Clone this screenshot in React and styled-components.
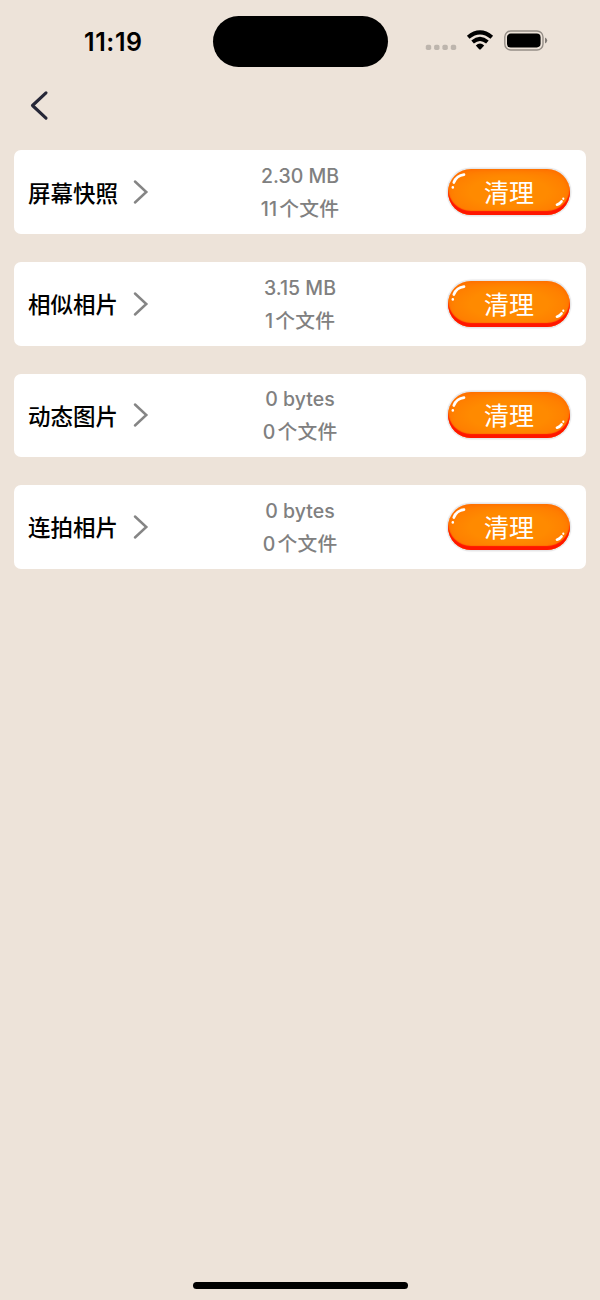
import React from "react";
import styled, { createGlobalStyle } from "styled-components";

const GlobalStyle = createGlobalStyle`
  * {
    box-sizing: border-box;
  }
  body {
    margin: 0;
    background: #ede3d9;
    font-family: Inter, "Noto Sans CJK SC", sans-serif;
  }
`;

const Screen = styled.div`
  width: 600px;
  height: 1300px;
  display: flex;
  flex-direction: column;
  background: #ede3d9;
  overflow: hidden;
`;

const StatusBar = styled.header`
  height: 82px;
  padding: 0 52px 0 84px;
  display: flex;
  align-items: center;
  flex-shrink: 0;
`;

const Time = styled.div`
  width: 128.5px;
  padding-top: 1px;
  font-size: 25px;
  font-weight: 600;
  line-height: 30px;
  letter-spacing: 0.6px;
  color: #000;
`;

const Island = styled.div`
  width: 175px;
  height: 51.5px;
  margin-top: 1px;
  border-radius: 26px;
  background: #000;
`;

const StatusIcons = styled.div`
  margin: -1.4px 0 0 auto;
  display: flex;
  svg {
    display: block;
  }
`;

const NavBar = styled.nav`
  height: 68.4px;
  padding: 8px 0 0 28px;
  flex-shrink: 0;
`;

const BackButton = styled.button`
  padding: 0;
  border: 0;
  background: none;
  svg {
    display: block;
  }
`;

const List = styled.main`
  flex: 1;
  display: flex;
  flex-direction: column;
  gap: 27.9px;
  padding: 0 14px;
`;

const Card = styled.section`
  height: 83.7px;
  padding: 0 14px;
  display: grid;
  grid-template-columns: 1fr 120px 1fr;
  align-items: center;
  background: #fff;
  border-radius: 7px;
`;

const Title = styled.div`
  display: flex;
  align-items: center;
  gap: 14.7px;
  font-family: "Noto Sans CJK SC", sans-serif;
  font-size: 22.5px;
  font-weight: 500;
  color: #000;
  white-space: nowrap;
`;

const TitleText = styled.span`
  line-height: 32px;
  padding-bottom: 1px;
`;

const Info = styled.div`
  text-align: center;
  font-size: 19.5px;
  font-weight: 500;
  line-height: 32px;
  color: #808080;
  white-space: nowrap;
`;

const InfoLine = styled.div`
  height: 32px;
`;

const CountLine = styled(InfoLine)`
  padding-top: 0.7px;
  letter-spacing: 0.2px;
`;

const Unit = styled.span`
  margin-left: 2px;
  font-size: 19.8px;
`;

const CleanButton = styled.button`
  position: relative;
  justify-self: end;
  width: 122px;
  height: 46px;
  margin-right: 2px;
  padding: 0;
  border: 0;
  border-radius: 23px;
  background: radial-gradient(ellipse at center, #ff8a00 45%, #ff7200 100%);
  box-shadow: 0 0 1px 1.5px #e6e6e8, inset 0 -4px 1px #ff1600,
    inset 0 0 5px #ff6500;
  font-family: "Noto Sans CJK SC", sans-serif;
  font-size: 25px;
  line-height: 44px;
  color: #fff;
`;

const CleanLabel = styled.span`
  display: block;
  padding-bottom: 3px;
`;

const Shine = styled.svg`
  position: absolute;
  left: 0;
  top: 0;
`;

const HomeBar = styled.div`
  width: 215px;
  height: 7px;
  margin: 0 auto 11.5px;
  border-radius: 4px;
  background: #000;
  flex-shrink: 0;
`;

const items = [
  { title: "屏幕快照", size: "2.30 MB", count: 11 },
  { title: "相似相片", size: "3.15 MB", count: 1 },
  { title: "动态图片", size: "0 bytes", count: 0 },
  { title: "连拍相片", size: "0 bytes", count: 0 },
];

function Chevron() {
  return (
    <svg width="16" height="26" viewBox="0 0 16 26" fill="none">
      <path
        d="M2 2.5 13.3 13 2 23.5"
        stroke="#858585"
        strokeWidth="2.5"
        strokeLinecap="round"
      />
    </svg>
  );
}

function StatusGlyphs() {
  return (
    <svg width="123" height="24" viewBox="425 28 123 24" fill="none">
      <g fill="#bdb5ad">
        <rect x="425.8" y="44.7" width="5.4" height="5.2" rx="1.7" />
        <rect x="434.1" y="44.7" width="5.4" height="5.2" rx="1.7" />
        <rect x="442.4" y="44.7" width="5.4" height="5.2" rx="1.7" />
        <rect x="450.8" y="44.7" width="5.4" height="5.2" rx="1.7" />
      </g>
      <path
        d="M468.2 37.3Q480 27.4 491.8 37.3M472.6 42Q480 35.8 487.4 42"
        stroke="#000"
        strokeWidth="4"
      />
      <path
        d="M475.8 45.6Q480 41.6 484.2 45.6L480.8 49.2Q480 49.9 479.2 49.2Z"
        fill="#000"
      />
      <rect
        x="504.8"
        y="31"
        width="38.2"
        height="19"
        rx="6"
        stroke="#958e87"
        strokeWidth="1.4"
      />
      <rect x="507" y="33.6" width="33.6" height="13.8" rx="3.8" fill="#000" />
      <path d="M545 37.6Q547.2 38.4 547.2 40.6T545 43.6Z" fill="#817b76" />
    </svg>
  );
}

function CleanAction() {
  return (
    <CleanButton>
      <CleanLabel>清理</CleanLabel>
      <Shine width="122" height="46" viewBox="0 0 122 46" fill="none">
        <g stroke="#fff" strokeLinecap="round">
          <path d="M5.8 13.5Q8.6 6.4 16 5.6" strokeWidth="2.7" />
          <path d="M4.8 18.2V18.4" strokeWidth="2.5" />
          <path d="M109 35.7Q112 34.8 113.5 32.5" strokeWidth="2.7" />
          <path d="M115.3 29.7V29.8" strokeWidth="2.2" />
        </g>
      </Shine>
    </CleanButton>
  );
}

export default function App() {
  return (
    <>
      <GlobalStyle />
      <Screen>
        <StatusBar>
          <Time>11:19</Time>
          <Island />
          <StatusIcons>
            <StatusGlyphs />
          </StatusIcons>
        </StatusBar>
        <NavBar>
          <BackButton aria-label="返回">
            <svg width="22" height="32" viewBox="0 0 22 32" fill="none">
              <path
                d="M18 2.8 4.5 15.5 18 28.2"
                stroke="#262737"
                strokeWidth="3.1"
                strokeLinecap="round"
                strokeLinejoin="round"
              />
            </svg>
          </BackButton>
        </NavBar>
        <List>
          {items.map((item) => (
            <Card key={item.title}>
              <Title>
                <TitleText>{item.title}</TitleText>
                <Chevron />
              </Title>
              <Info>
                <InfoLine>{item.size}</InfoLine>
                <CountLine>
                  {item.count}
                  <Unit>个文件</Unit>
                </CountLine>
              </Info>
              <CleanAction />
            </Card>
          ))}
        </List>
        <HomeBar />
      </Screen>
    </>
  );
}
